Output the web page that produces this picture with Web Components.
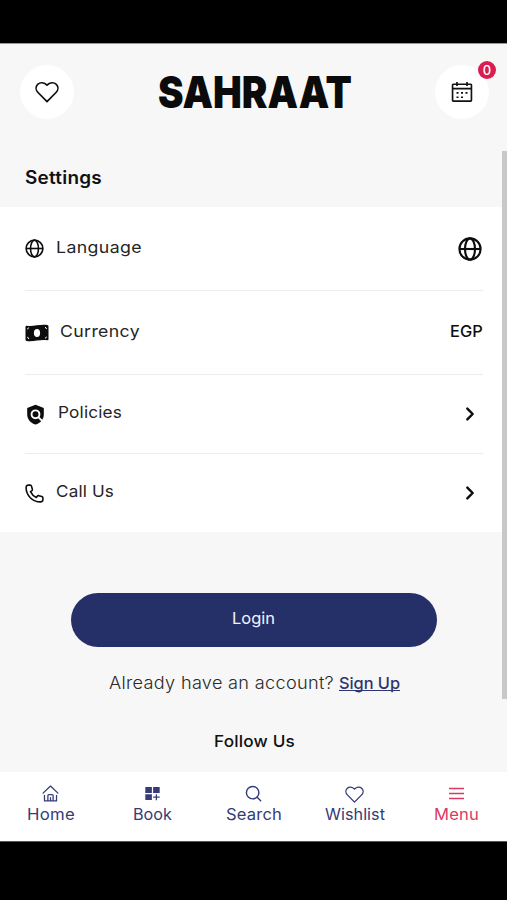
<!DOCTYPE html>
<html lang="en">
<head>
<meta charset="utf-8">
<title>Sahraat</title>
<style>
html,body{margin:0;background:#000}
body{font-family:Inter,"Open Sans",sans-serif;color:#111}
</style>
</head>
<body>
<sahraat-app></sahraat-app>
<script>
const define = (name, html, after) => customElements.define(name, class extends HTMLElement {
  connectedCallback() {
    if (this.shadowRoot) return;
    this.attachShadow({mode: 'open'}).innerHTML = typeof html === 'function' ? html(this) : html;
    if (after) after(this);
  }
});

const globe = '<g fill="none" stroke="currentColor" stroke-width="STROKE"><circle cx="12" cy="12" r="10.6"/><ellipse cx="12" cy="12" rx="5" ry="10.6"/><path d="M1.2 12H22.8"/></g>';
const heart = '<path fill="none" stroke="currentColor" stroke-width="1.700" stroke-linejoin="round" d="M12 21.6 3 12.5C.6 10 .5 6.500 2.700 4.300 5.200 1.900 9.300 2.300 12 5.200 14.700 2.300 18.800 1.900 21.300 4.300 23.500 6.500 23.400 10 21 12.500Z"/>';
const icons = {
  heart,
  globe: globe.replace('STROKE', '2'),
  globebold: globe.replace('STROKE', '2.1'),
  calendar: '<path fill="none" stroke="currentColor" stroke-width="1.8" stroke-linejoin="round" d="M2.500 3.500H21.500Q22.300 3.500 22.300 4.300V21Q22.300 22 21.500 22H2.500Q1.700 22 1.700 21V4.300Q1.700 3.500 2.500 3.500ZM1.700 8.300H22.300M6.500 1V5.500M17.500 1V5.500"/><path fill="currentColor" d="M6 12h2.200v1.800H6zM10.900 12h2.200v1.800h-2.200zM15.800 12H18v1.800h-2.200zM6 16.800h2.200v1.800H6zM10.900 16.800h2.200v1.800h-2.200z"/>',
  money: '<path fill="currentColor" d="M.5 5.800Q.5 4.600 1.700 4.700C8 6.100 14.500 2.900 22.500 4.100Q23.500 4.300 23.500 5.400V18.200Q23.500 19.400 22.300 19.300C15.500 17.900 9 21.100 1.500 19.900Q.5 19.700.5 18.600Z"/><ellipse cx="12" cy="12" rx="3.100" ry="3.900" fill="#fff"/><path stroke="#fff" stroke-width="1" fill="none" d="M2.200 8Q3.600 7.900 3.600 6.500M2.200 16.200Q3.600 16.300 3.800 18M21.800 7.700Q20.400 7.500 20.400 6M21.800 16Q20.400 16.100 20.400 17.500"/>',
  shield: '<path fill="currentColor" d="M12 .8 21.500 4.500V11.500C21.500 17.500 17.800 22 12 23.500 6.200 22 2.500 17.500 2.500 11.500V4.500Z"/><circle cx="12" cy="11.800" r="4.500" fill="none" stroke="#fff" stroke-width="2.200"/><path stroke="#fff" stroke-width="2.200" d="m15.200 15 5.500 5.500"/>',
  phone: '<path fill="none" stroke="currentColor" stroke-width="2" stroke-linejoin="round" d="M1.400 4.500C1.400 2.300 2.700 1.400 4.400 1.400H6.500Q7.800 1.400 8.200 2.700L9.300 6.600Q9.600 7.900 8.500 8.600L6.900 9.700C8.400 12.900 11 15.600 14.300 17.100L15.400 15.500Q16.100 14.400 17.400 14.700L21.300 15.800Q22.600 16.200 22.600 17.500V19.600C22.600 21.500 21.500 22.600 19.500 22.600 9.500 22.600 1.400 14.500 1.400 4.500Z"/>',
  chevron: '<path fill="none" stroke="currentColor" stroke-width="3.700" stroke-linecap="round" stroke-linejoin="round" d="m8 4 8 8-8 8"/>',
  home: '<g fill="none" stroke="currentColor" stroke-width="1.800" stroke-linecap="round" stroke-linejoin="round"><path d="M1.500 11.500 12 1.500 22.500 11.500M3.500 14.500V22.500H20.500V14.500M8.300 22V15Q8.300 13.500 9.500 13.500H14.500Q15.700 13.500 15.700 15V22M12 22V18"/></g>',
  book: '<path fill="currentColor" d="M.5 1.500H11V11H.5zM13 1.500H23.500V11H13zM.5 13H11V22.500H.5zM17.200 13h2v3.900h4.300v1.900h-4.300v3.900h-2v-3.900h-4.200v-1.900h4.200z"/>',
  search: '<g fill="none" stroke="currentColor" stroke-width="2" stroke-linecap="round"><circle cx="10.800" cy="10.800" r="8.800"/><path d="m17.200 17.200 5 5"/></g>',
  menu: '<path stroke="currentColor" stroke-width="2.300" d="M0 4H24M0 12H24M0 20H24"/>'
};

define('app-icon', el => `<style>:host{display:block;flex:none;width:${el.getAttribute('size')}px;height:${el.getAttribute('size')}px}svg{display:block;overflow:visible}</style>
<svg width="100%" height="100%" viewBox="0 0 24 24">${icons[el.getAttribute('name')]}</svg>`);

/* Text run set to a fixed measure, by glyph width and tracking together, or by glyph width alone with "condense". */
define('fit-text', el => `<style>:host{display:block;flex:none;width:${el.getAttribute('w')}px;line-height:24px;white-space:nowrap}span{display:inline-block;transform-origin:0 50%}</style><span><slot></slot></span>`,
  el => {
    const span = el.shadowRoot.querySelector('span'), w = +el.getAttribute('w');
    const natural = span.getBoundingClientRect().width;
    const share = el.hasAttribute('condense') ? 1 : .65;
    const scale = 1 + (w / natural - 1) * share;
    span.style.letterSpacing = (w / scale - natural) / el.textContent.length + 'px';
    span.style.transform = `scaleX(${scale})`;
  });

define('round-button', `<style>:host{display:grid;place-items:center;position:relative;width:54px;height:54px;border-radius:50%;background:#fff}
::slotted([slot=badge]){position:absolute;right:-7px;top:-4px;width:18px;height:18px;border-radius:50%;background:#d81e50;color:#fff;font-size:13px;font-weight:500;line-height:18px;text-align:center}</style>
<slot></slot><slot name="badge"></slot>`);

define('app-header', `<style>:host{display:flex;justify-content:space-between;padding:21px 18px 0 20px;height:86px;box-sizing:border-box}
fit-text{font-size:44px;font-weight:900;color:#0b0b0b}
fit-text.logo{line-height:54px}</style>
<round-button><app-icon name="heart" size="24"></app-icon></round-button>
<fit-text class="logo" w="194" condense>SAHRAAT</fit-text>
<round-button><app-icon name="calendar" size="22"></app-icon><span slot="badge">0</span></round-button>`);

define('setting-row', el => `<style>:host{display:flex;align-items:center;box-sizing:border-box;margin:0 24px 0 25px;height:${el.getAttribute('h')}px;border-bottom:1px solid #ececee;color:#0d0d0d;font-size:16.500px}
:host([last]){border-bottom:0}
fit-text{margin:0 auto ${el.getAttribute('lift') || 3}px ${el.getAttribute('gap')}px;color:#252525}</style>
<slot name="icon"></slot><fit-text w="${el.getAttribute('w')}">${el.getAttribute('label')}</fit-text><slot></slot>`);

define('settings-list', `<style>:host{display:block;background:#fff}.egp{font-size:16px;font-weight:500;margin:0 0 3px 0}.g{margin-right:1px}.c{margin-right:5px}</style>
<setting-row label="Language" h="84" w="86" gap="12"><app-icon slot="icon" name="globe" size="19"></app-icon><app-icon class="g" name="globebold" size="24"></app-icon></setting-row>
<setting-row label="Currency" h="84" w="80" gap="11"><app-icon slot="icon" name="money" size="24"></app-icon><fit-text class="egp" w="33">EGP</fit-text></setting-row>
<setting-row label="Policies" h="79" w="64" gap="12" lift="5"><app-icon slot="icon" name="shield" size="21"></app-icon><app-icon class="c" name="chevron" size="16"></app-icon></setting-row>
<setting-row label="Call Us" h="78" w="58" gap="12" lift="5" last><app-icon slot="icon" name="phone" size="19"></app-icon><app-icon class="c" name="chevron" size="16"></app-icon></setting-row>`);

define('login-panel', `<style>:host{display:flex;flex-direction:column;align-items:center;padding-top:60.500px;height:240px;box-sizing:border-box}
button{display:flex;justify-content:center;align-items:center;width:366px;height:54px;padding:0 0 3px;border:0;border-radius:27px;background:#252f68;color:#f3f4fb;font:400 16.500px Inter,sans-serif}
p{display:flex;gap:5px;margin:24.500px 0 0 2px;font-size:17px;font-weight:300;color:#2a2a2a}
a{height:20px;color:#30356f;font-size:16.500px;font-weight:500;border-bottom:1px solid #30356f;box-sizing:border-box}
.follow{margin:38px 0 0 1px;font-size:16.500px;font-weight:500;color:#111}
p{height:20px}</style>
<button><fit-text w="43">Login</fit-text></button>
<p><fit-text w="225">Already have an account?</fit-text><a><fit-text w="61">Sign Up</fit-text></a></p>
<fit-text class="follow" w="81">Follow Us</fit-text>`);

define('nav-item', el => `<style>:host{display:flex;flex-direction:column;align-items:center;color:#343b76;font-size:16px}:host([active]){color:#da3a66}
.i{height:18px;display:grid;place-items:center}fit-text{margin:-1px 0 0 1px}</style>
<div class="i"><app-icon name="${el.getAttribute('icon')}" size="${el.getAttribute('size')}"></app-icon></div><fit-text w="${el.getAttribute('w')}">${el.getAttribute('label')}</fit-text>`);

define('bottom-nav', `<style>:host{display:grid;grid-template-columns:repeat(5,1fr);box-sizing:border-box;height:69px;padding-top:12.500px;background:#fff}</style>
<nav-item icon="home" size="17" w="48" label="Home"></nav-item>
<nav-item icon="book" size="15" w="39" label="Book"></nav-item>
<nav-item icon="search" size="17" w="56" label="Search"></nav-item>
<nav-item icon="heart" size="19" w="60" label="Wishlist"></nav-item>
<nav-item icon="menu" size="15" w="45" label="Menu" active></nav-item>`);

define('sahraat-app', `<style>:host{display:block;position:relative;height:900px;box-sizing:border-box;padding-top:43px;background:#000;overflow:hidden}
main{background:#f7f7f7;border-top:1px solid #999;border-bottom:1px solid #555}
h1{margin:0;height:77px;padding:36px 0 0 25px;box-sizing:border-box;font-size:18px;font-weight:600}
.bar{position:absolute;right:0;top:151px;width:5px;height:548px;background:#c8c8c8}</style>
<main><app-header></app-header><h1><fit-text w="77">Settings</fit-text></h1><settings-list></settings-list><login-panel></login-panel><bottom-nav></bottom-nav></main><div class="bar"></div>`);
</script>
</body>
</html>
